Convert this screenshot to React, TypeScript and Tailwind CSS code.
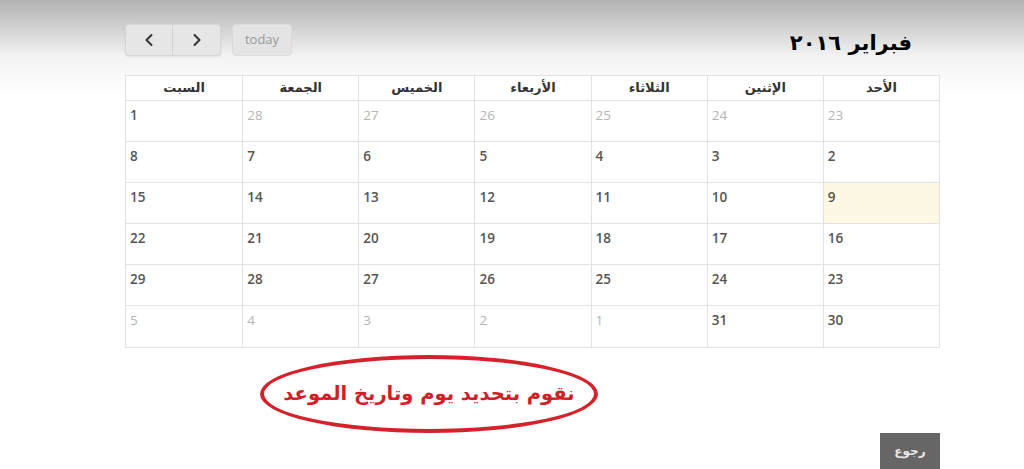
import React from "react";

const days = ["الأحد", "الإثنين", "الثلاثاء", "الأربعاء", "الخميس", "الجمعة", "السبت"];

type Cell = { n: number; other?: boolean; today?: boolean };

const weeks: Cell[][] = [
  [{ n: 23, other: true }, { n: 24, other: true }, { n: 25, other: true }, { n: 26, other: true }, { n: 27, other: true }, { n: 28, other: true }, { n: 1 }],
  [{ n: 2 }, { n: 3 }, { n: 4 }, { n: 5 }, { n: 6 }, { n: 7 }, { n: 8 }],
  [{ n: 9, today: true }, { n: 10 }, { n: 11 }, { n: 12 }, { n: 13 }, { n: 14 }, { n: 15 }],
  [{ n: 16 }, { n: 17 }, { n: 18 }, { n: 19 }, { n: 20 }, { n: 21 }, { n: 22 }],
  [{ n: 23 }, { n: 24 }, { n: 25 }, { n: 26 }, { n: 27 }, { n: 28 }, { n: 29 }],
  [{ n: 30 }, { n: 31 }, { n: 1, other: true }, { n: 2, other: true }, { n: 3, other: true }, { n: 4, other: true }, { n: 5, other: true }],
];

export default function App() {
  return (
    <div
      className="w-[1024px] h-[469px] overflow-hidden bg-gradient-to-b from-[#b2b2b2] via-[#f3f3f3] via-[12%] to-white to-[20%]"
      style={{ fontFamily: "'DejaVu Sans', sans-serif" }}
    >
      <div className="ml-[125px] w-[815px] pt-[24px]">
        {/* toolbar */}
        <div className="flex items-center justify-between h-[32px]">
          <div className="flex items-center gap-[11px]">
            <div className="flex h-[32px] rounded-[4px] border border-[#d6d6d6] bg-[#e6e6e6] shadow-[0_1px_2px_rgba(0,0,0,0.08)]">
              <div className="w-[47px] flex items-center justify-center border-r border-[#d2d2d2]">
                <svg width="10" height="14" viewBox="0 0 10 14" fill="none">
                  <path d="M7.5 2 L2.5 7 L7.5 12" stroke="#333" strokeWidth="2" strokeLinecap="round" strokeLinejoin="round" />
                </svg>
              </div>
              <div className="w-[47px] flex items-center justify-center">
                <svg width="10" height="14" viewBox="0 0 10 14" fill="none">
                  <path d="M2.5 2 L7.5 7 L2.5 12" stroke="#333" strokeWidth="2" strokeLinecap="round" strokeLinejoin="round" />
                </svg>
              </div>
            </div>
            <div
              className="h-[32px] w-[60px] flex items-center justify-center rounded-[4px] border border-[#dcdcdc] bg-[#e4e4e4] text-[#9a9a9a] text-[13px]"
              style={{ fontFamily: "'Open Sans', sans-serif" }}
            >
              today
            </div>
          </div>
          <div
            dir="rtl"
            className="mr-[28px] mt-[6px] text-[21px] font-bold text-black leading-none"
            style={{ fontFamily: "'DejaVu Sans', sans-serif" }}
          >
            فبراير ٢٠١٦
          </div>
        </div>

        {/* calendar */}
        <div dir="rtl" className="mt-[19px] border border-[#e2e2e2] bg-white">
          <div className="grid grid-cols-7 h-[25px]">
            {days.map((d, i) => (
              <div
                key={d}
                className={`flex items-center justify-center text-[13px] font-bold text-[#333] border-b border-[#e2e2e2] ${i < 6 ? "border-l" : ""}`}
              >
                {d}
              </div>
            ))}
          </div>
          {weeks.map((w, wi) => (
            <div key={wi} className="grid grid-cols-7 h-[41px]">
              {w.map((c, ci) => (
                <div
                  key={ci}
                  dir="ltr"
                  className={`text-left pl-[4px] pt-[6px] text-[13.5px] leading-[16px] ${ci < 6 ? "border-l" : ""} ${wi < 5 ? "border-b" : ""} border-[#e2e2e2] ${c.today ? "bg-[#fcf8e3]" : ""} ${c.other ? "text-[#b4b4b4]" : "text-[#555] font-semibold"}`}
                  style={{ fontFamily: "'Open Sans', sans-serif" }}
                >
                  {c.n}
                </div>
              ))}
            </div>
          ))}
        </div>

        {/* annotation */}
        <div className="flex mt-[7px] ml-[135px]">
          <div className="w-[338px] h-[78px] rounded-[50%] border-[4px] border-[#d6212b] flex items-center justify-center">
            <span dir="rtl" className="whitespace-nowrap text-[#d01f27] text-[19.5px] font-bold leading-none" style={{ fontFamily: "'DejaVu Sans', sans-serif" }}>
              نقوم بتحديد يوم وتاريخ الموعد
            </span>
          </div>
        </div>

        {/* back button */}
        <div className="flex justify-end">
          <div className="w-[60px] h-[36px] bg-[#666666] flex items-center justify-center text-[#e8e8e8] text-[12px] font-bold" dir="rtl">
            رجوع
          </div>
        </div>
      </div>
    </div>
  );
}
